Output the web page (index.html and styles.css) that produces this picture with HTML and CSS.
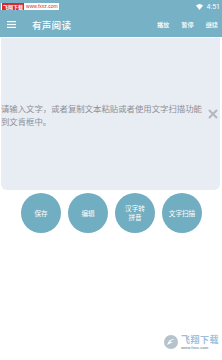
FILE: index.html
```html
<!DOCTYPE html>
<html lang="zh">
<head>
<meta charset="utf-8">
<link rel="stylesheet" href="styles.css">
</head>
<body>
<div class="app">
  <header class="header">
    <div class="statusbar">
      <div class="wm-top"><span class="wm-brand">飞翔下载</span><span class="wm-url">www.fxxz.com</span></div>
      <div class="status-right">
        <svg class="wifi" width="7" height="6" viewBox="0 0 14 12"><path d="M7 12 L0 3 Q7 -3 14 3 Z" fill="#fff"/></svg>
        <span class="time">4:51</span>
      </div>
    </div>
    <div class="toolbar">
      <svg class="menu" width="9" height="7" viewBox="0 0 9 7"><rect x="0" y="0" width="9" height="1.2" fill="#fff"/><rect x="0" y="2.9" width="9" height="1.2" fill="#fff"/><rect x="0" y="5.8" width="9" height="1.2" fill="#fff"/></svg>
      <span class="title">有声阅读</span>
      <nav class="actions"><span>播放</span><span>暂停</span><span>继续</span></nav>
    </div>
  </header>
  <section class="panel">
    <p class="placeholder">请输入文字，或者复制文本粘贴或者使用文字扫描功能到文肯框中。</p>
    <svg class="clear" width="10" height="10" viewBox="0 0 10 10"><path d="M1 1 L9 9 M9 1 L1 9" stroke="#b4b7bb" stroke-width="2"/></svg>
  </section>
  <div class="buttons">
    <div class="circle">保存</div>
    <div class="circle">编辑</div>
    <div class="circle">汉字转<br>拼音</div>
    <div class="circle">文字扫描</div>
  </div>
  <div class="wm-bottom">
    <svg class="wm-logo" width="16" height="16" viewBox="0 0 16 16"><circle cx="8" cy="8" r="7" fill="#a9b9c4"/><path d="M4 11 Q6 4 12 5 Q8 6 7 8 L10 8 L6 10 Z" fill="#fff"/></svg>
    <div class="wm-text"><span class="wm-name">飞翔下载</span><span class="wm-site">www.fxxz.com</span></div>
  </div>
</div>
</body>
</html>
```

FILE: styles.css
```css
* { box-sizing: border-box; margin: 0; padding: 0; }
html, body { width: 222px; height: 360px; background: #ffffff; overflow: hidden; }
body { font-family: "Noto Sans CJK SC", "Noto Sans", sans-serif; }
.app { position: relative; width: 222px; height: 360px; }
.header { background: #76b1c5; height: 37px; }
.statusbar { height: 12px; display: flex; justify-content: space-between; align-items: center; padding: 0 2px 0 1px; }
.wm-top { display: flex; align-items: center; height: 7px; background: #fff; font-size: 5px; line-height: 7px; padding: 0 1px; font-family: "Liberation Sans", sans-serif; white-space: nowrap; }
.wm-brand { color: #fff; background: #d9282f; font-weight: bold; padding: 0 1px; font-family: "Noto Sans CJK SC", sans-serif; }
.wm-url { color: #d9282f; margin-left: 2px; }
.status-right { display: flex; align-items: center; gap: 4px; padding-top: 1px; }
.time { color: #fff; font-size: 7px; font-family: "Roboto", sans-serif; }
.toolbar { height: 25px; display: flex; align-items: center; padding: 0 4px 0 7px; }
.menu { margin-right: 16px; }
.title { color: #fff; font-size: 9.6px; font-weight: 500; letter-spacing: 0.2px; flex: 1; }
.actions { display: flex; gap: 12px; }
.actions span { color: #fff; font-size: 6.2px; font-weight: 500; }
.panel { margin: 1px 2px 0 1px; height: 152px; background: #e8ecf3; border-radius: 0 0 6px 6px; display: flex; align-items: center; position: relative; }
.placeholder { width: 204px; font-size: 8.4px; line-height: 12.5px; color: #8d9095; margin-top: 1px; }
.clear { position: absolute; right: 2px; top: 71px; }
.buttons { display: flex; justify-content: center; gap: 7px; margin-top: 3px; padding-left: 1px; }
.circle { width: 40px; height: 40px; border-radius: 50%; background: #72aec1; color: #fff; font-size: 6.6px; line-height: 9px; display: flex; align-items: center; justify-content: center; text-align: center; white-space: nowrap; }
.wm-bottom { position: absolute; left: 163px; top: 334px; display: flex; align-items: center; gap: 2px; opacity: 0.85; white-space: nowrap; }
.wm-text { display: flex; flex-direction: column; line-height: 1; }
.wm-name { font-size: 9px; line-height: 10px; color: #8fb5d3; font-weight: bold; letter-spacing: 0.5px; }
.wm-site { font-size: 4px; line-height: 5px; color: #7d8a94; font-family: "Liberation Sans", sans-serif; font-weight: bold; }
```
